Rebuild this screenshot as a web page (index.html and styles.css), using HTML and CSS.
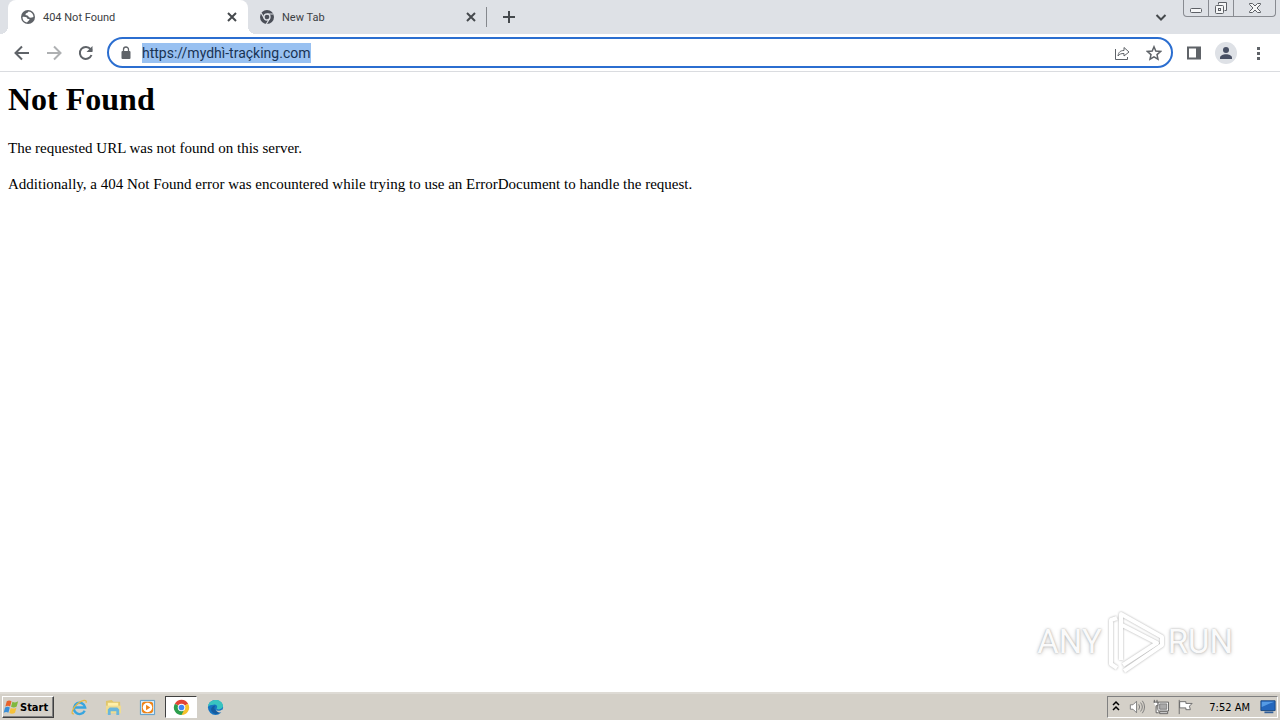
FILE: index.html
```html
<!DOCTYPE html>
<html lang="en">

<head>
    <meta charset="UTF-8">
    <meta name="viewport" content="width=device-width, initial-scale=1.0">
    <title>404 Not Found</title>
    <link rel="stylesheet" href="styles.css">
</head>

<body>
    <header class="tab-bar">
        <div class="tab active">
            <svg class="favicon" viewBox="0 0 16 16">
                <circle cx="8" cy="8" r="7" fill="#5f6368"/>
                <path d="M8.500 2.500C8 4 5.500 4 5.500 5.500S8 6 8.500 7.500 11 9 13.500 8A5.500 5.500 0 0 0 8.500 2.500zM2.500 8C5 7.500 7.500 8.500 7.500 10H9.500C9.500 11.500 8 12 7 13.400A5.500 5.500 0 0 1 2.500 8z" fill="#fff"/>
            </svg>
            <span class="tab-title">404 Not Found</span>
            <button class="tab-close" aria-label="Close tab"><svg viewBox="0 0 16 16"><path d="M4 4l8 8M12 4l-8 8"/></svg></button>
        </div>
        <div class="tab">
            <svg class="favicon" viewBox="0 0 16 16">
                <circle cx="8" cy="8" r="7" fill="#4b4f58"/>
                <circle cx="8" cy="8" r="3" fill="#4b4f58" stroke="#dee1e6" stroke-width="1.300"/>
                <path d="M8 5h6.500M5.400 9.500L2.200 4M10.600 9.500L7.400 15" stroke="#dee1e6" stroke-width="1.200"/>
            </svg>
            <span class="tab-title">New Tab</span>
            <button class="tab-close" aria-label="Close tab"><svg viewBox="0 0 16 16"><path d="M4 4l8 8M12 4l-8 8"/></svg></button>
        </div>
        <span class="separator"></span>
        <button class="new-tab" aria-label="New tab"><svg viewBox="0 0 16 16"><path d="M8 2v12M2 8h12"/></svg></button>
        <button class="tab-search" aria-label="Search tabs"><svg viewBox="0 0 16 16"><path d="M3.500 6L8 10.500 12.500 6"/></svg></button>
        <div class="window-buttons">
            <button aria-label="Minimize"><svg viewBox="0 0 16 16"><rect x="2.500" y="8.500" width="11" height="4" rx="1"/></svg></button>
            <button aria-label="Restore"><svg viewBox="0 0 16 16"><path d="M5.500 4.500v-2h8v8h-2"/><rect x="2.500" y="5.500" width="8" height="8" rx="1"/><rect x="5.500" y="8.500" width="2" height="2"/></svg></button>
            <button class="wide" aria-label="Close"><svg viewBox="0 0 16 16"><path d="M2.500 3.500h3L8 6l2.500-2.500h3v1L10 8l3.500 3.500v1h-3L8 10l-2.500 2.500h-3v-1L6 8 2.500 4.500z"/></svg></button>
        </div>
    </header>

    <nav class="toolbar">
        <button class="tool" aria-label="Back"><svg viewBox="0 0 16 16"><path d="M15 8H2M8 1.500L1.500 8 8 14.500"/></svg></button>
        <button class="tool" aria-label="Forward" disabled><svg viewBox="0 0 16 16"><path d="M1 8h13M8 1.500L14.500 8 8 14.500"/></svg></button>
        <button class="tool" aria-label="Reload"><svg viewBox="0 0 16 16"><path d="M13.500 10A6 6 0 1 1 12.600 4.200L14 5.700"/><path d="M14.500 1v6h-6z" class="solid"/></svg></button>
        <div class="address">
            <svg class="lock" viewBox="0 0 16 16"><rect x="3.500" y="6" width="9" height="8" rx="1" fill="#5f6368"/><path d="M5.500 6V4.500a2.500 2.500 0 0 1 5 0V6" fill="none" stroke="#5f6368" stroke-width="1.300"/></svg>
            <input class="url" id="url" type="text" aria-label="Address" value="https://mydhì-traçking.com" spellcheck="false">
            <button class="tool thin" aria-label="Share"><svg viewBox="0 0 16 16"><path d="M1.500 4v10.500h12V12M4 11c.5-4 2.500-5.500 6-5.500v-3L15 7l-5 4V8.500c-3 0-4.500.5-6 2.500z"/></svg></button>
            <button class="tool" aria-label="Bookmark"><svg viewBox="0 0 16 16"><path d="M8 1.800l1.800 4.300 4.700.4-3.500 3.100 1 4.600L8 11.800l-4 2.400 1-4.600-3.500-3.100 4.700-.4z" class="fine"/></svg></button>
        </div>
        <button class="tool" aria-label="Side panel"><svg viewBox="0 0 16 16"><path d="M2 2.500h12v11H2z"/><path d="M10 2h4v12h-4z" class="solid"/></svg></button>
        <button class="tool profile" aria-label="Profile"><svg viewBox="0 0 22 22"><circle cx="11" cy="11" r="11" fill="#dee1e6"/><circle cx="11" cy="8" r="3" fill="#485064"/><path d="M5 16c0-5 12-5 12 0v1H5z" fill="#485064"/></svg></button>
        <button class="tool" aria-label="Menu"><svg viewBox="0 0 16 16"><path d="M7 2h3v3H7zM7 7h3v3H7zM7 12h3v3H7z" class="solid"/></svg></button>
    </nav>

    <main class="page">
        <h1>Not Found</h1>
        <p>The requested URL was not found on this server.</p>
        <p>Additionally, a 404 Not Found error was encountered while trying to use an ErrorDocument to handle the request.</p>
        <div class="watermark">
            <span>ANY</span>
            <svg viewBox="0 0 60 64">
                <path d="M12 8L6 10v44l6 4M16 50V4l41 23v8L19 61M17 15l35 18-34 22"/>
            </svg>
            <span>RUN</span>
        </div>
    </main>

    <footer class="taskbar">
        <button class="start">
            <svg viewBox="0 0 18 18">
                <path d="M4 3c2-1.500 3.500-1 5 0L7.500 8.500C6 7.500 4.500 7.500 2.500 8.500z" fill="#e9632b"/>
                <path d="M10 3.500c2 1 4 1 6-.5l-1.500 5.500c-2 1.300-4 1.200-6 .2z" fill="#80b83f"/>
                <path d="M2.200 9.500c2-1 3.500-1 5 0L5.700 15c-1.500-1-3-1-5 0z" fill="#3a8fd8"/>
                <path d="M8.200 10c2 1 4 1 6-.3L12.700 15c-2 1.400-4 1.400-6 .4z" fill="#f6c23a"/>
            </svg>
            Start
        </button>
        <div class="apps">
            <button class="app" aria-label="Internet Explorer"><svg viewBox="0 0 18 18">
                <path d="M14.500 12.500A6 6 0 1 1 15 9H4" fill="none" stroke="#38a5df" stroke-width="2.500"/>
                <path d="M3 15.500C-1 17 2 9 7 5s10-5 9-1" fill="none" stroke="#e5b843" stroke-width="1.300"/>
            </svg></button>
            <button class="app" aria-label="Explorer"><svg viewBox="0 0 18 18">
                <path d="M1 2l6-1 2 2h7v12H1z" fill="#e0c66c"/>
                <path d="M3 4h11v5H3z" fill="#fff0a9"/>
                <path d="M1 7h16v8H1z" fill="#efdc91"/>
                <path d="M3 17v-6l2-2h8l2 2v6h-3v-4H6v4z" fill="#69b6dc"/>
            </svg></button>
            <button class="app" aria-label="Media Player"><svg viewBox="0 0 18 18">
                <path d="M1.500 1.500h15v15h-15z" fill="#d6ecfa" stroke="#579bc9"/>
                <rect x="3" y="3" width="12" height="12" rx="3" fill="#ef8418"/>
                <circle cx="9" cy="9" r="5" fill="#fff"/>
                <path d="M7.500 6v6l4.500-3z" fill="#ef8418"/>
            </svg></button>
            <button class="app pressed" aria-label="Chrome"><svg viewBox="0 0 18 18">
                <path d="M9 9L2 5a8 8 0 0 1 14 0z" fill="#e34436"/>
                <path d="M9 9h0L16 5A8 8 0 0 1 9 17z" fill="#f6c12c"/>
                <path d="M2 5a8 8 0 0 0 7 12l3-6-3-2z" fill="#2c9e4c"/>
                <circle cx="9" cy="9" r="4" fill="#fff"/>
                <circle cx="9" cy="9" r="3" fill="#4285f4"/>
            </svg></button>
            <button class="app" aria-label="Edge"><svg viewBox="0 0 18 18">
                <circle cx="9" cy="9" r="8" fill="#1674c1"/>
                <path d="M1 8C2-1 16-1 17 7c0 4-5 5-7 3 2-2 0-5-3-4-3 0-5 1-6 2z" fill="#38c3c0"/>
                <path d="M9 7c-3 3 0 7 5 6l2-1c-1 3-6 5-9 3-5-3-2-8 2-8z" fill="#155b9f"/>
                <path d="M10 10c-1 3 4 3 6 1l2 1-2 2c-4 1-7-1-6-4z" fill="#d4d0c8"/>
            </svg></button>
        </div>
        <div class="tray">
            <svg viewBox="0 0 10 16"><path d="M2 6l3-3 3 3M2 11l3-3 3 3" fill="none" stroke="#000" stroke-width="1.500"/></svg>
            <svg viewBox="0 0 18 18"><path d="M1.500 6.500h3l4-4v13l-4-4h-3z" fill="#fff" stroke="#777"/><path d="M11 6q2 3 0 6M13 4q4 5 0 10M15 2q5 7 0 14" fill="none" stroke="#777"/></svg>
            <svg viewBox="0 0 18 18"><path d="M5.500 3.500h12v10h-12z" fill="#fff" stroke="#555"/><path d="M7.500 5.500h8v6h-8z" fill="#aaa" stroke="#777"/><path d="M7.500 14.500h9v2h-9z" fill="#fff" stroke="#555"/><path d="M.5 3.500h5v4h-2v8h3M1.500 1v3M4.500 1v3" fill="#fff" stroke="#555"/></svg>
            <svg viewBox="0 0 18 18"><path d="M2.500 1v16M3 3h7v2h7l-3 3 1 4h-5v-2H3z" fill="#fff" stroke="#666"/></svg>
            <time>7:52 AM</time>
            <svg viewBox="0 0 18 18"><path d="M1 2h16v11H1z" fill="#2467bd" stroke="#164580"/><path d="M2 3h14L2 9z" fill="#559be5"/><path d="M5 14h10v2H5z" fill="#315f99"/></svg>
        </div>
    </footer>
</body>

</html>
```
FILE: styles.css
```css
* {
    box-sizing: border-box;
}

body {
    margin: 0;
    min-height: 100vh;
    display: flex;
    flex-direction: column;
    background: #fff;
    font-family: "DejaVu Sans Condensed", "DejaVu Sans", sans-serif;
}

button {
    border: 0;
    padding: 0;
    background: none;
    font-family: inherit;
    color: inherit;
}

svg {
    display: block;
    flex-shrink: 0;
}

.tab-bar {
    display: flex;
    height: 34px;
    padding-left: 8px;
    background: #dee1e6;
}

.tab {
    display: flex;
    align-items: center;
    width: 240px;
    padding: 0 9px 0 11px;
    font-family: Roboto, sans-serif;
    font-size: 11px;
    color: #3c4043;
}

.tab.active {
    position: relative;
    padding: 0 8px 0 12px;
    background: #fff;
    border-radius: 8px 8px 0 0;
}

/* flared bottom corners of the selected tab */
.tab.active::before,
.tab.active::after {
    content: '';
    position: absolute;
    bottom: 0;
    width: 8px;
    height: 8px;
}

.tab.active::before {
    right: 100%;
    background: radial-gradient(circle at 0 0, #dee1e6 8px, #fff 8px);
}

.tab.active::after {
    left: 100%;
    background: radial-gradient(circle at 100% 0, #dee1e6 8px, #fff 8px);
}

.favicon {
    width: 16px;
    height: 16px;
    margin-right: 7px;
}

.tab-title {
    flex: 1;
}

.tab-close svg,
.new-tab svg,
.tab-search svg {
    width: 16px;
    height: 16px;
    fill: none;
    stroke: #45494d;
    stroke-width: 2;
}

.separator {
    width: 1px;
    height: 20px;
    margin: 7px 14px 0 -2px;
    background: #85888d;
}

.tab-search {
    margin-left: auto;
    margin-right: 14px;
}

.window-buttons {
    display: flex;
    height: 17px;
    border: 1px solid #888b91;
    border-top: 0;
    border-radius: 0 0 4px 4px;
    margin-right: 4px;
}

.window-buttons button {
    width: 25px;
    display: flex;
    justify-content: center;
    border-right: 1px solid #888b91;
}

.window-buttons .wide {
    width: 41px;
    border: 0;
}

.window-buttons svg {
    width: 16px;
    height: 16px;
    fill: #f5f6f7;
    stroke: #5d6066;
}

.toolbar {
    display: flex;
    align-items: center;
    gap: 16px;
    height: 38px;
    padding: 0 14px;
    border-bottom: 1px solid #dadce0;
}

.tool svg {
    width: 16px;
    height: 16px;
    fill: none;
    stroke: #5f6368;
    stroke-width: 2;
}

.tool:disabled {
    opacity: 0.5;
}

.tool .solid {
    fill: #5f6368;
    stroke: none;
}

.tool.thin svg {
    stroke-width: 1;
}

.tool .fine {
    stroke-width: 1.5;
}

.tool.profile {
    margin: 0 -3px;
}

.tool.profile svg {
    width: 22px;
    height: 22px;
    stroke: none;
}

.address {
    display: flex;
    align-items: center;
    gap: 16px;
    flex: 1;
    min-width: 0;
    height: 31px;
    margin: 0 -3px;
    padding: 0 9px;
    border: 2px solid #2b6ed0;
    border-radius: 16px;
}

.lock {
    width: 16px;
    height: 16px;
    margin-right: -8px;
}

.url {
    field-sizing: content;
    height: 20px;
    margin-right: auto;
    padding: 0;
    border: 0;
    outline: 0;
    background: #99c1f1;
    font-family: Roboto, sans-serif;
    font-size: 14px;
    color: #183354;
}

.page {
    position: relative;
    flex: 1;
    padding: 8px;
    font-family: "Liberation Serif", serif;
    font-size: 15px;
    line-height: 18px;
    color: #000;
}

.page h1 {
    margin: 0 0 21px;
    font-size: 32px;
    line-height: 38px;
}

.page p {
    margin: 0 0 18px;
}

.watermark {
    position: absolute;
    right: 47px;
    bottom: 18px;
    display: flex;
    align-items: center;
    gap: 3px;
    font-family: Roboto, sans-serif;
    font-size: 33px;
    line-height: 64px;
    color: #fafafa;
    text-shadow: 0 0 2px #aaa, 0 1px 4px #ccc;
}

.watermark svg {
    width: 60px;
    height: 64px;
    fill: none;
    stroke: #fff;
    stroke-width: 4;
    stroke-linejoin: round;
    filter: drop-shadow(0 0 1px #aaa);
}

.taskbar {
    display: flex;
    align-items: center;
    height: 28px;
    padding: 2px;
    border-top: 2px solid #dedbd5;
    background: #d4d0c8;
    font-size: 11px;
}

.start {
    display: flex;
    align-items: center;
    width: 52px;
    height: 22px;
    border: 1px solid;
    border-color: #fff #404040 #404040 #fff;
    box-shadow: inset -1px -1px #808080;
    font-size: 11px;
    font-weight: bold;
}

.start svg {
    width: 17px;
    height: 18px;
}

.apps {
    display: flex;
    gap: 2px;
    margin-left: 9px;
}

.app {
    display: flex;
    align-items: center;
    justify-content: center;
    width: 32px;
    height: 22px;
}

.app svg {
    width: 17px;
    height: 17px;
}

.app.pressed {
    border: 1px solid;
    border-color: #404040 #fff #fff #404040;
    background: #fff;
}

.tray {
    display: flex;
    align-items: center;
    height: 22px;
    margin-left: auto;
    padding: 0 1px 0 3px;
    gap: 8px;
    border: 1px solid;
    border-color: #808080 #fff #fff #808080;
}

.tray svg {
    width: 16px;
    height: 16px;
}

.tray svg:first-child {
    width: 10px;
}

.tray time {
    margin: 0 2px 0 8px;
}
```
